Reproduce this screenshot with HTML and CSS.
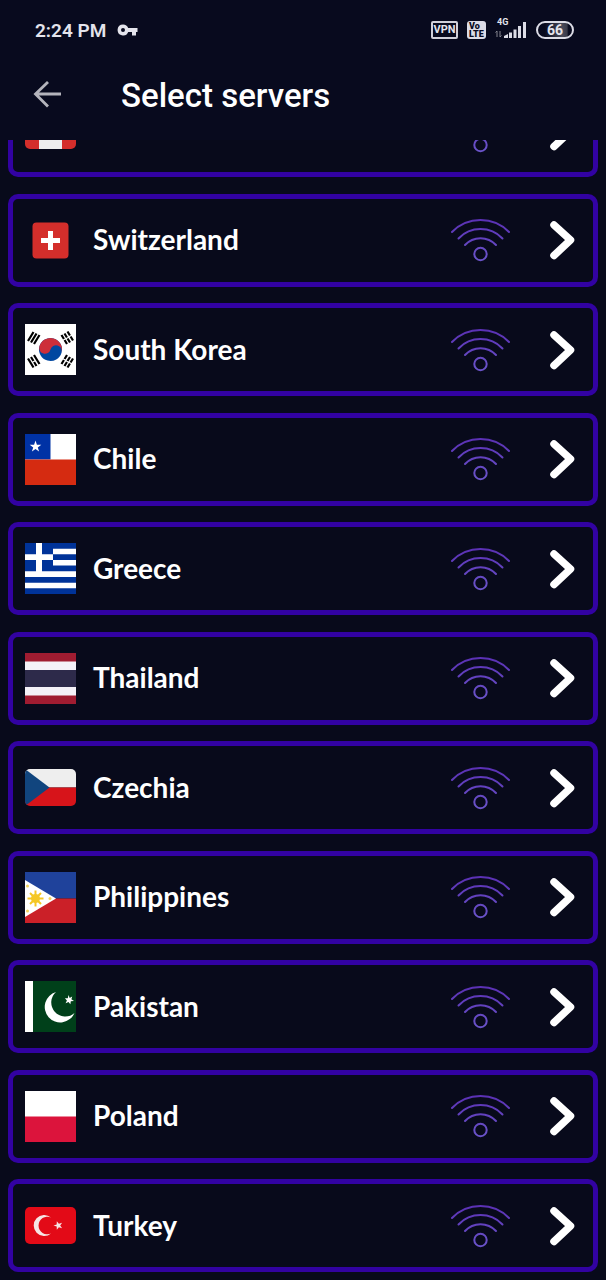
FILE: index.html
```
<!DOCTYPE html>
<html lang="en">
<head>
    <meta charset="UTF-8">
    <meta name="viewport" content="width=device-width, initial-scale=1.0">
    <title>Select servers</title>
    <link rel="stylesheet" href="styles.css">
</head>
<body>
    <!-- Shared icons -->
    <svg class="sprite" aria-hidden="true">
        <defs>
            <linearGradient id="signal" gradientUnits="userSpaceOnUse" x1="0" y1="0" x2="0" y2="44">
                <stop offset="0" stop-color="#5a2fb4"/>
                <stop offset="1" stop-color="#6b55cb"/>
            </linearGradient>
        </defs>
        <symbol id="wifi" viewBox="0 0 62 44">
            <g fill="none" stroke="url(#signal)" stroke-width="2" stroke-linecap="round">
                <path d="M2 14A40 40 0 0 1 59 14"/>
                <path d="M8.5 20.5A30.5 30.5 0 0 1 52.5 20.5"/>
                <path d="M15 27A21 21 0 0 1 46 27"/>
                <circle cx="30.5" cy="36" r="6.2"/>
            </g>
        </symbol>
        <symbol id="chevron" viewBox="0 0 26 40">
            <path d="M5 5L21.500 20L5 35.500" fill="none" stroke="#fff" stroke-width="7.500" stroke-linecap="round" stroke-linejoin="round"/>
        </symbol>
    </svg>

    <div class="app">
        <!-- Status bar -->
        <div class="status-bar">
            <span class="time">2:24 PM</span>
            <svg class="key" width="21" height="14" viewBox="0 0 21 14" aria-hidden="true">
                <path fill="#e4e4ec" fill-rule="evenodd" d="M6 1.500a5.500 5.500 0 1 0 5.200 7.500H15v3.500h4V9h1.500V5h-9.300A5.500 5.500 0 0 0 6 1.500zM6 5a2 2 0 1 1 0 4a2 2 0 0 1 0-4z"/>
            </svg>
            <div class="status-icons">
                <span class="vpn">VPN</span>
                <span class="volte"><span>Vo</span><span>LTE</span></span>
                <div class="network">
                    <span class="network-type">4G</span>
                    <svg width="32" height="17" viewBox="0 0 32 17" aria-hidden="true">
                        <path d="M2 16V10M0.500 11.500L2 10M5 10V16M6.500 14.500L5 16" stroke="#85858f" stroke-width="1" fill="none"/>
                        <path fill="#dcdce6" d="M9 17v-2l4-2v4zM14 11.500h3v5.500h-3zM18.500 8.500h3v8.500h-3zM23 5h3v12h-3zM28 1h3v16h-3z"/>
                    </svg>
                </div>
                <span class="battery">66</span>
            </div>
        </div>

        <!-- Header -->
        <header class="header">
            <a class="back" href="#" aria-label="Back">
                <svg width="28" height="28" viewBox="0 0 28 28" aria-hidden="true">
                    <path d="M15 1L2.500 13L15 25.500M2.500 13H28" fill="none" stroke="#b4b4bc" stroke-width="2.800"/>
                </svg>
            </a>
            <h1>Select servers</h1>
        </header>

        <!-- Server list -->
        <main class="scroller">
            <ul class="server-list">
                <li>
                    <a class="server" href="#" aria-label="Canada">
                        <svg class="flag" viewBox="0 0 51 51" aria-hidden="true">
                            <rect y="7" width="51" height="37" rx="5" fill="#d42e2b"/>
                            <path fill="#eee" d="M14 7h23v37H14z"/>
                            <path fill="#d42e2b" d="M25.500 14l2 4 2-1-1 6 3-2 3 3-5 5 1 3-5-1v4h-1v-4l-5 1 1-3-5-5 3-3 3 2-1-6 2 1z"/>
                        </svg>
                        <span class="name"></span>
                        <svg class="wifi" aria-hidden="true"><use href="#wifi"/></svg>
                        <svg class="chevron" aria-hidden="true"><use href="#chevron"/></svg>
                    </a>
                </li>
                <li>
                    <a class="server" href="#">
                        <svg class="flag" viewBox="0 0 51 51" aria-hidden="true">
                            <rect x="7.500" y="7.500" width="36" height="36" rx="4" fill="#d42e2b"/>
                            <path fill="#fff" d="M23 16h5v7h7v5h-7v7h-5v-7h-7v-5h7z"/>
                        </svg>
                        <span class="name">Switzerland</span>
                        <svg class="wifi" aria-hidden="true"><use href="#wifi"/></svg>
                        <svg class="chevron" aria-hidden="true"><use href="#chevron"/></svg>
                    </a>
                </li>
                <li>
                    <a class="server" href="#">
                        <svg class="flag" viewBox="0 0 51 51" aria-hidden="true">
                            <path fill="#fff" d="M0 0h51v51H0z"/>
                            <g transform="rotate(15 25.500 25.500)">
                                <circle cx="25.500" cy="25.500" r="11.500" fill="#0047a0"/>
                                <path fill="#cd2e3a" d="M14 25.500a11.500 11.500 0 0 1 23 0a5.750 5.750 0 0 0-11.500 0a5.750 5.750 0 0 1-11.500 0z"/>
                            </g>
                            <g stroke="#000" stroke-width="2.200">
                                <path d="M3 17L8.500 8M6 18.500L11.500 9.500M9 20L14.500 11"/>
                                <path d="M36.500 40L42 31M39.500 42L45 33M42.500 43.500L48 34.500" stroke-dasharray="4.700 1.200"/>
                                <path d="M3 34.500L8.500 43.500M9 31L14.500 40"/>
                                <path d="M6 33L11.500 42" stroke-dasharray="4.700 1.200"/>
                                <path d="M36.500 11L42 20M39.500 9.500L45 18.500M42.500 7.500L48 16.500" stroke-dasharray="4.700 1.200"/>
                            </g>
                        </svg>
                        <span class="name">South Korea</span>
                        <svg class="wifi" aria-hidden="true"><use href="#wifi"/></svg>
                        <svg class="chevron" aria-hidden="true"><use href="#chevron"/></svg>
                    </a>
                </li>
                <li>
                    <a class="server" href="#">
                        <svg class="flag" viewBox="0 0 51 51" aria-hidden="true">
                            <path fill="#fff" d="M0 0h51v51H0z"/>
                            <path fill="#0032a5" d="M0 0h25.500v25.500H0z"/>
                            <path fill="#d52b11" d="M0 25.500h51V51H0z"/>
                            <path fill="#fff" d="M10.500 6.500l1.400 4.200h4.400l-3.500 2.700 1.300 4.200-3.600-2.600-3.600 2.600 1.300-4.200-3.500-2.700h4.400z"/>
                        </svg>
                        <span class="name">Chile</span>
                        <svg class="wifi" aria-hidden="true"><use href="#wifi"/></svg>
                        <svg class="chevron" aria-hidden="true"><use href="#chevron"/></svg>
                    </a>
                </li>
                <li>
                    <a class="server" href="#">
                        <svg class="flag" viewBox="0 0 51 51" aria-hidden="true">
                            <path fill="#003399" d="M0 0h51v51H0z"/>
                            <path fill="#fff" d="M28 5.700h23v5.600H28zM28 17h23v5.600H28zM0 28.300h51V34H0zM0 39.700h51v5.600H0zM11 0h6v28.300h-6zM0 11.300h28V17H0z"/>
                        </svg>
                        <span class="name">Greece</span>
                        <svg class="wifi" aria-hidden="true"><use href="#wifi"/></svg>
                        <svg class="chevron" aria-hidden="true"><use href="#chevron"/></svg>
                    </a>
                </li>
                <li>
                    <a class="server" href="#">
                        <svg class="flag" viewBox="0 0 51 51" aria-hidden="true">
                            <path fill="#a01c31" d="M0 0h51v51H0z"/>
                            <path fill="#f4f1f8" d="M0 8.500h51v34H0z"/>
                            <path fill="#2d2a4a" d="M0 17h51v17H0z"/>
                        </svg>
                        <span class="name">Thailand</span>
                        <svg class="wifi" aria-hidden="true"><use href="#wifi"/></svg>
                        <svg class="chevron" aria-hidden="true"><use href="#chevron"/></svg>
                    </a>
                </li>
                <li>
                    <a class="server" href="#">
                        <svg class="flag" viewBox="0 0 51 51" aria-hidden="true">
                            <clipPath id="czechia"><rect y="7" width="51" height="37" rx="5"/></clipPath>
                            <g clip-path="url(#czechia)">
                                <path fill="#eee" d="M0 7h51v18.500H0z"/>
                                <path fill="#d7141a" d="M0 25.500h51V44H0z"/>
                                <path fill="#11457e" d="M0 7l24.500 18.500L0 44z"/>
                            </g>
                        </svg>
                        <span class="name">Czechia</span>
                        <svg class="wifi" aria-hidden="true"><use href="#wifi"/></svg>
                        <svg class="chevron" aria-hidden="true"><use href="#chevron"/></svg>
                    </a>
                </li>
                <li>
                    <a class="server" href="#">
                        <svg class="flag" viewBox="0 0 51 51" aria-hidden="true">
                            <path fill="#1f429b" d="M0 0h51v26.500H0z"/>
                            <path fill="#cb2028" d="M0 26.500h51V51H0z"/>
                            <path fill="#fff" d="M0 8l31 18.500L0 45z"/>
                            <circle cx="10.500" cy="26.500" r="4.500" fill="#f5c724"/>
                            <path d="M10.500 18.500v16M2.500 26.500h16M5 21l11 11M16 21L5 32" stroke="#f5c724" stroke-width="2"/>
                            <g fill="#f5d45c">
                                <circle cx="2.500" cy="14" r="1.500"/>
                                <circle cx="2.500" cy="39" r="1.500"/>
                                <circle cx="25" cy="26.500" r="1.500"/>
                            </g>
                        </svg>
                        <span class="name">Philippines</span>
                        <svg class="wifi" aria-hidden="true"><use href="#wifi"/></svg>
                        <svg class="chevron" aria-hidden="true"><use href="#chevron"/></svg>
                    </a>
                </li>
                <li>
                    <a class="server" href="#">
                        <svg class="flag" viewBox="0 0 51 51" aria-hidden="true">
                            <path fill="#00401a" d="M0 0h51v51H0z"/>
                            <path fill="#fff" d="M0 0h8v51H0z"/>
                            <path fill="#fff" d="M31 11A15.500 15.500 0 1 0 49.500 32A13.800 13.800 0 1 1 31 11z"/>
                            <path fill="#fff" d="M43.500 14l1.200 2.900 2.500-1.500-.8 2.900 2.600 1.700-3.200.2-.4 3.100-1.900-2.300-2.900 1.200 1.300-2.800-2-2.200h2.900z"/>
                        </svg>
                        <span class="name">Pakistan</span>
                        <svg class="wifi" aria-hidden="true"><use href="#wifi"/></svg>
                        <svg class="chevron" aria-hidden="true"><use href="#chevron"/></svg>
                    </a>
                </li>
                <li>
                    <a class="server" href="#">
                        <svg class="flag" viewBox="0 0 51 51" aria-hidden="true">
                            <path fill="#fff" d="M0 0h51v51H0z"/>
                            <path fill="#dc143c" d="M0 25.500h51V51H0z"/>
                        </svg>
                        <span class="name">Poland</span>
                        <svg class="wifi" aria-hidden="true"><use href="#wifi"/></svg>
                        <svg class="chevron" aria-hidden="true"><use href="#chevron"/></svg>
                    </a>
                </li>
                <li>
                    <a class="server" href="#">
                        <svg class="flag" viewBox="0 0 51 51" aria-hidden="true">
                            <rect y="7" width="51" height="37" rx="5" fill="#e30a17"/>
                            <path fill="#f6e4e4" d="M26 17.500A10.500 10.500 0 1 0 26 33.500A8.800 8.800 0 1 1 26 17.500z"/>
                            <path fill="#f6e4e4" d="M28.500 25.500l3.200-1 .1-3.300 2.100 2.600 3.200-1-1.900 2.700 1.900 2.700-3.200-1-2.100 2.600-.1-3.300z"/>
                        </svg>
                        <span class="name">Turkey</span>
                        <svg class="wifi" aria-hidden="true"><use href="#wifi"/></svg>
                        <svg class="chevron" aria-hidden="true"><use href="#chevron"/></svg>
                    </a>
                </li>
            </ul>
        </main>
    </div>
</body>
</html>
```
FILE: styles.css
```
* {
    box-sizing: border-box;
}
body {
    margin: 0;
    background-color: #080a1e;
    color: #fff;
    font-family: Roboto, sans-serif;
}
.sprite {
    position: absolute;
    width: 0;
    height: 0;
}
.app {
    display: flex;
    flex-direction: column;
    height: 100vh;
}
.status-bar {
    display: flex;
    align-items: center;
    flex: 0 0 60px;
    padding: 0 32px 0 35px;
    color: #e4e4ec;
}
.time {
    font-size: 19px;
    font-weight: 600;
}
.key {
    margin-left: 11px;
}
.status-icons {
    display: flex;
    align-items: center;
    gap: 9px;
    margin-left: auto;
}
.vpn {
    width: 27px;
    border: 2px solid #d0d0da;
    border-radius: 2px;
    font-size: 11px;
    font-weight: 700;
    line-height: 14px;
    text-align: center;
}
.volte {
    display: flex;
    flex-direction: column;
    width: 19px;
    height: 18px;
    padding: 1px 1px 1px 2px;
    border-radius: 3px;
    background-color: #dcdce6;
    color: #080a1e;
    font-size: 9px;
    font-weight: 900;
    line-height: 8px;
}
.network {
    display: flex;
    flex-direction: column;
    margin-top: -6px;
}
.network-type {
    margin-bottom: -6px;
    padding-left: 2px;
    font-size: 9px;
    font-weight: 700;
    line-height: 10px;
}
.battery {
    width: 38px;
    border: 2px solid #dcdce6;
    border-radius: 9px;
    background: linear-gradient(90deg, #080a1e 20%, #4a4b5a 70%, #3a3b4a 85%, #080a1e 90%);
    font-size: 14px;
    font-weight: 700;
    line-height: 14px;
    text-align: center;
}
.header {
    display: flex;
    align-items: center;
    flex: 0 0 80px;
    gap: 60px;
    padding: 0 33px 10px;
}
.back {
    display: flex;
}
h1 {
    margin: 0;
    font-size: 33px;
    font-weight: 500;
}
.scroller {
    display: flex;
    flex-direction: column;
    flex: 1;
    min-height: 0;
    overflow: hidden;
    background-color: #080a1b;
}
/* The list is scrolled past its first row */
.server-list {
    display: flex;
    flex-direction: column;
    justify-content: space-between;
    flex: 1;
    margin: -56px 8px 8px;
    padding: 0;
    list-style: none;
}
.server {
    display: flex;
    align-items: center;
    height: 93px;
    padding: 0 18px 0 12px;
    border: 5px solid #3202a2;
    border-radius: 10px;
    color: #fff;
    text-decoration: none;
}
.flag {
    width: 51px;
    height: 51px;
}
.name {
    flex: 1;
    margin-left: 17px;
    padding-bottom: 2px;
    font-family: Lato, sans-serif;
    font-size: 28px;
    font-weight: 700;
}
.wifi {
    width: 62px;
    height: 44px;
}
.chevron {
    width: 26px;
    height: 40px;
    margin-left: 37px;
}
```
